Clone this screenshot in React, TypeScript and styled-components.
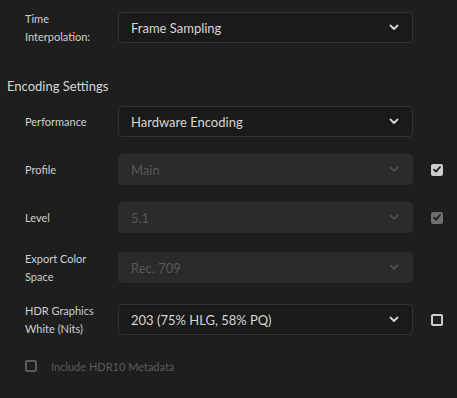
import React from "react";
import styled, { createGlobalStyle } from "styled-components";

const GlobalStyle = createGlobalStyle`
  html, body {
    margin: 0;
    padding: 0;
    background: #1e1e1e;
  }
  body {
    font-family: "Lato", "Noto Sans", sans-serif;
  }
`;

const Panel = styled.div`
  width: 457px;
  height: 398px;
  background: #1e1e1e;
  box-sizing: border-box;
  padding-top: 10px;
  display: flex;
  flex-direction: column;
  overflow: hidden;
`;

const Row = styled.div<{ $tall?: boolean }>`
  display: flex;
  align-items: center;
  height: ${(p) => (p.$tall ? 35 : 31)}px;
  padding-left: 25px;
  margin-bottom: 17px;
`;

const Label = styled.div`
  width: 93px;
  font-size: 11px;
  line-height: 18px;
  color: #cfcfcf;
`;

const Select = styled.div<{ $disabled?: boolean }>`
  width: 295px;
  height: 31px;
  box-sizing: border-box;
  display: flex;
  align-items: center;
  justify-content: space-between;
  padding: 0 13px 0 12px;
  border-radius: 4px;
  font-size: 13px;
  background: ${(p) => (p.$disabled ? "#2b2b2b" : "#1a1a1a")};
  border: 1px solid ${(p) => (p.$disabled ? "#2b2b2b" : "#323232")};
  color: ${(p) => (p.$disabled ? "#575757" : "#d6d6d6")};
`;

const CheckCell = styled.div`
  width: 30px;
  display: flex;
  justify-content: flex-end;
`;

const Box = styled.div<{ $checked?: boolean; $disabled?: boolean }>`
  width: 12px;
  height: 12px;
  box-sizing: border-box;
  border-radius: 2px;
  display: flex;
  align-items: center;
  justify-content: center;
  background: ${(p) =>
    p.$checked ? (p.$disabled ? "#6f6f6f" : "#cdcdcd") : "transparent"};
  border: 2px solid
    ${(p) =>
      p.$checked
        ? p.$disabled
          ? "#6f6f6f"
          : "#cdcdcd"
        : p.$disabled
        ? "#5a5a5a"
        : "#cdcdcd"};
`;

const Heading = styled.div`
  font-size: 13px;
  color: #d6d6d6;
  padding-left: 7px;
  margin-top: 15px;
  margin-bottom: 11px;
  line-height: 18px;
`;

const MetaRow = styled.div`
  display: flex;
  align-items: center;
  gap: 14px;
  padding-left: 25px;
  margin-top: 6px;
  height: 12px;
  font-size: 11px;
  color: #5c5c5c;
`;

const Chevron = ({ color }: { color: string }) => (
  <svg width="10" height="7" viewBox="0 0 10 7">
    <path
      d="M1.5 1.5 L5 5 L8.5 1.5"
      fill="none"
      stroke={color}
      strokeWidth="1.8"
      strokeLinecap="round"
      strokeLinejoin="round"
    />
  </svg>
);

const Check = () => (
  <svg width="8" height="7" viewBox="0 0 8 7">
    <path
      d="M1 3.6 L3 5.6 L7 1"
      fill="none"
      stroke="#1e1e1e"
      strokeWidth="1.8"
      strokeLinecap="round"
      strokeLinejoin="round"
    />
  </svg>
);

type Field = {
  label: string[];
  value: string;
  disabled?: boolean;
  check?: "on" | "on-disabled" | "off";
};

const fields: Field[] = [
  { label: ["Performance"], value: "Hardware Encoding" },
  { label: ["Profile"], value: "Main", disabled: true, check: "on" },
  { label: ["Level"], value: "5.1", disabled: true, check: "on-disabled" },
  { label: ["Export Color", "Space"], value: "Rec. 709", disabled: true },
  {
    label: ["HDR Graphics", "White (Nits)"],
    value: "203 (75% HLG, 58% PQ)",
    check: "off",
  },
];

const SelectRow = ({ f }: { f: Field }) => (
  <Row $tall={f.label.length > 1}>
    <Label>
      {f.label.map((l, i) => (
        <div key={i}>{l}</div>
      ))}
    </Label>
    <Select $disabled={f.disabled}>
      <span>{f.value}</span>
      <Chevron color={f.disabled ? "#4e4e4e" : "#d6d6d6"} />
    </Select>
    <CheckCell>
      {f.check && (
        <Box
          $checked={f.check !== "off"}
          $disabled={f.check === "on-disabled"}
        >
          {f.check !== "off" && <Check />}
        </Box>
      )}
    </CheckCell>
  </Row>
);

export default function App() {
  return (
    <Panel>
      <GlobalStyle />
      <SelectRow
        f={{ label: ["Time", "Interpolation:"], value: "Frame Sampling" }}
      />
      <Heading>Encoding Settings</Heading>
      {fields.map((f, i) => (
        <SelectRow key={i} f={f} />
      ))}
      <MetaRow>
        <Box $disabled />
        <span>Include HDR10 Metadata</span>
      </MetaRow>
    </Panel>
  );
}
